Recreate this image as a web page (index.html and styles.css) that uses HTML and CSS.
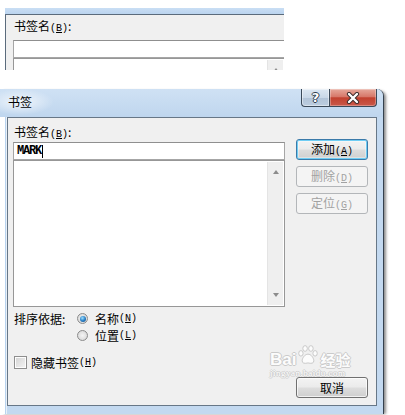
FILE: index.html
```html
<!DOCTYPE html>
<html lang="zh-CN">
<head>
<meta charset="utf-8">
<title>书签</title>
<link rel="stylesheet" href="styles.css">
</head>
<body>
<div class="snip">
  <div class="snip-bar"></div>
  <div class="snip-panel">
    <div class="label">书签名<span class="key">(<u>B</u>)</span>:</div>
    <div class="field"></div>
    <div class="list"><div class="scroll"><span class="arr up"></span></div></div>
  </div>
</div>

<div class="dialog">
  <div class="titlebar">
    <div class="title">书签</div>
    <div class="caption-btns">
      <div class="cb help">?</div>
      <div class="cb close">
        <svg width="14" height="12" viewBox="0 0 14 12">
          <path d="M3 2 L11 10 M11 2 L3 10" stroke="#3a2a2a" stroke-width="4.2" stroke-linecap="round" fill="none"/>
          <path d="M3 2 L11 10 M11 2 L3 10" stroke="#ffffff" stroke-width="2.4" stroke-linecap="round" fill="none"/>
        </svg>
      </div>
    </div>
  </div>
  <div class="body">
    <div class="panel">
      <div class="left">
        <div class="label">书签名<span class="key">(<u>B</u>)</span>:</div>
        <div class="field"><span class="mark">MARK</span><span class="caret"></span></div>
        <div class="list"><div class="scroll"><span class="arr up"></span><span class="arr down"></span></div></div>
        <div class="sort">
          <div class="sort-label">排序依据:</div>
          <div class="opts">
            <div class="opt"><span class="radio on"></span>名称<span class="key">(<u>N</u>)</span></div>
            <div class="opt"><span class="radio"></span>位置<span class="key">(<u>L</u>)</span></div>
          </div>
        </div>
        <div class="check-row"><span class="check"></span>隐藏书签<span class="key">(<u>H</u>)</span></div>
      </div>
      <div class="right">
        <button class="btn default">添加<span class="key">(<u>A</u>)</span></button>
        <button class="btn" disabled>删除<span class="key">(<u>D</u>)</span></button>
        <button class="btn" disabled>定位<span class="key">(<u>G</u>)</span></button>
        <button class="btn cancel">取消</button>
      </div>
    </div>
  </div>
  <div class="watermark">
    <div class="wm-row">
      <span class="wm-text">Bai</span>
      <svg class="paw" width="22" height="20" viewBox="0 0 26 24">
        <ellipse cx="4.5" cy="10" rx="2.6" ry="3.3" fill="#fff" stroke="#b8b8b8"/>
        <ellipse cx="9.5" cy="4.2" rx="2.7" ry="3.4" fill="#fff" stroke="#b8b8b8"/>
        <ellipse cx="16.5" cy="4.2" rx="2.7" ry="3.4" fill="#fff" stroke="#b8b8b8"/>
        <ellipse cx="21.5" cy="10" rx="2.6" ry="3.3" fill="#fff" stroke="#b8b8b8"/>
        <path d="M13 11 C9 11 6 16 6 19 C6 22 9 22.5 13 21.5 C17 22.5 20 22 20 19 C20 16 17 11 13 11 Z" fill="#fff" stroke="#b8b8b8"/>
      </svg>
      <span class="wm-text wm-cn">经验</span>
    </div>
    <div class="wm-url">jingyan.baidu.com</div>
  </div>
</div>
</body>
</html>
```
FILE: styles.css
```css
* { box-sizing: border-box; }
html, body { margin: 0; padding: 0; background: #fff; }
body {
  width: 405px;
  height: 415px;
  overflow: hidden;
  font-family: "Noto Sans CJK SC", "Noto Sans", sans-serif;
  font-size: 12px;
  color: #000;
}
.key { font-family: "Liberation Mono", monospace; font-size: 10px; }
.key u { text-underline-offset: 1px; }

/* ---------- top snippet ---------- */
.snip {
  margin: 8px 0 0 5px;
  width: 279px;
  height: 62px;
  overflow: hidden;
  display: flex;
  flex-direction: column;
}
.snip-bar { flex: none; height: 6px; background: linear-gradient(#c9def4, #bbd4ef); }
.snip-panel {
  flex: 1;
  background: #f0f0f0;
  border-top: 1px solid #5b6b7c;
  border-left: 1px solid #5b6b7c;
  padding: 3px 0 0 7px;
  width: 300px;
}
.snip-panel .label { line-height: 15px; margin-bottom: 4px; }

/* ---------- shared controls ---------- */
.label { line-height: 15px; padding-left: 1px; }
.field {
  width: 272px;
  height: 18px;
  background: #fff;
  border: 1px solid #a6a6a6;
  border-top-color: #8f8f8f;
  display: flex;
  align-items: center;
  padding-left: 3px;
}
.mark {
  font-family: "Liberation Mono", monospace;
  font-weight: bold;
  font-size: 12px;
  letter-spacing: -1.2px;
  line-height: 12px;
}
.caret { width: 1px; height: 13px; background: #000; margin-left: 1px; }
.list {
  width: 272px;
  height: 147px;
  background: #fff;
  border: 1px solid #979797;
  display: flex;
  justify-content: flex-end;
  padding: 1px;
}
.scroll {
  width: 16px;
  background: #efefef;
  border-left: 1px solid #e4e4e4;
  display: flex;
  flex-direction: column;
  justify-content: space-between;
  align-items: center;
  padding: 8px 0 8px;
}
.arr { width: 0; height: 0; border-left: 3.5px solid transparent; border-right: 3.5px solid transparent; }
.arr.up { border-bottom: 4px solid #8c8c8c; }
.arr.down { border-top: 4px solid #8c8c8c; }

/* ---------- dialog ---------- */
.dialog {
  position: relative;
  margin-top: 19px;
  width: 384px;
  height: 325px;
  border-right: 1px solid #34414e;
  border-top-right-radius: 7px;
  background: #c3d9f0;
  box-shadow: 3px 1px 3px -1px rgba(0,0,0,0.45);
}
.titlebar {
  height: 28px;
  display: flex;
  justify-content: space-between;
  align-items: flex-start;
  padding: 0 6px 0 8px;
  border-top-right-radius: 7px;
  background:
    radial-gradient(ellipse 34px 13px at 20px 13px, rgba(255,255,255,0.75), rgba(255,255,255,0) 100%),
    linear-gradient(#cfe1f4, #bfd6ee);
}
.title { padding-top: 6px; line-height: 14px; }
.caption-btns { display: flex; }
.cb {
  height: 18px;
  border: 1px solid #3b4a5a;
  border-top: none;
  display: flex;
  align-items: center;
  justify-content: center;
}
.help {
  width: 28px;
  border-right: none;
  border-bottom-left-radius: 4px;
  background: linear-gradient(#dce7f2 0%, #c9d8e8 50%, #b2c4d8 52%, #bccde0 100%);
  font-family: "DejaVu Sans", sans-serif;
  font-weight: bold;
  font-size: 13px;
  color: #fff;
  text-shadow: 1px 0 0 #2d3c4c, -1px 0 0 #2d3c4c, 0 1px 0 #2d3c4c, 0 -1px 0 #2d3c4c;
  box-shadow: inset 0 0 0 1px rgba(255,255,255,0.45);
}
.close {
  width: 48px;
  border-bottom-right-radius: 4px;
  background: linear-gradient(#e6a89b 0%, #d7786a 45%, #c2412f 52%, #c9584a 100%);
  box-shadow: inset 0 0 0 1px rgba(255,255,255,0.3);
}

.body {
  height: 297px;
  background: linear-gradient(to right, #ffffff 0 5px, #b9d3ee 5px 6px, #e8f0f8 6px 7px, rgba(0,0,0,0) 7px);
}
.panel {
  margin-left: 7px;
  width: 370px;
  height: 289px;
  background: #f0f0f0;
  border: 1px solid #677787;
  display: flex;
}
.left { width: 272px; margin-left: 5px; padding-top: 6px; }
.sort { display: flex; margin-top: 3px; padding-left: 1px; }
.sort-label { width: 63px; line-height: 17px; }
.opts { display: flex; flex-direction: column; }
.opt { display: flex; align-items: center; height: 17px; }
.radio {
  width: 11px;
  height: 11px;
  border-radius: 50%;
  border: 1px solid #8b8b8b;
  background: radial-gradient(circle at 50% 50%, #f4f4f4 0%, #e2e2e2 55%, #cfcfcf 100%);
  margin-right: 7px;
  display: flex;
  align-items: center;
  justify-content: center;
}
.radio.on::after {
  content: "";
  width: 6px;
  height: 6px;
  border-radius: 50%;
  background: radial-gradient(circle at 40% 35%, #9fe0ff 0%, #2b82c8 50%, #0e4680 100%);
}
.check-row { display: flex; align-items: center; height: 16px; margin-top: 10px; padding-left: 1px; }
.check {
  width: 13px;
  height: 13px;
  border: 1px solid #8e8e8e;
  background: linear-gradient(135deg, #d2d2d2, #f6f6f6);
  box-shadow: inset 0 0 0 1px #fdfdfd;
  margin-right: 4px;
}

.right {
  width: 72px;
  margin-left: 11px;
  padding-top: 21px;
  display: flex;
  flex-direction: column;
  gap: 6px;
}
.btn {
  width: 72px;
  height: 21px;
  padding: 0;
  border: 1px solid #707070;
  border-radius: 3px;
  background: linear-gradient(#f3f3f3 0%, #ebebeb 48%, #dddddd 52%, #cfcfcf 100%);
  box-shadow: inset 0 0 0 1px rgba(255,255,255,0.7);
  font-family: "Noto Sans CJK SC", "Noto Sans", sans-serif;
  font-size: 12px;
  line-height: 17px;
  color: #000;
}
.btn.default {
  border-color: #3b7aa9;
  box-shadow: inset 0 0 0 1px #6fcdf4, inset 0 0 0 2px rgba(255,255,255,0.35);
}
.btn:disabled {
  border-color: #b3b6b9;
  background: #f4f4f4;
  box-shadow: none;
  color: #a2a2a2;
}
.btn.cancel { margin-top: auto; margin-bottom: 7px; }

/* ---------- watermark overlay ---------- */
.watermark {
  position: absolute;
  left: 270px;
  top: 258px;
  pointer-events: none;
  opacity: 0.85;
}
.wm-row { display: flex; align-items: flex-end; height: 21px; }
.wm-text {
  font-family: "Liberation Sans", sans-serif;
  font-weight: bold;
  font-size: 17px;
  line-height: 17px;
  color: #ffffff;
  text-shadow: 1px 0 0 #c4c4c4, -1px 0 0 #c4c4c4, 0 1px 0 #c4c4c4, 0 -1px 0 #c4c4c4;
}
.wm-cn { font-family: "Noto Sans CJK SC", sans-serif; font-size: 15px; margin-left: 1px; }
.paw { margin: 0 0 3px 1px; }
.wm-url {
  font-family: "Liberation Serif", serif;
  font-size: 9px;
  line-height: 10px;
  letter-spacing: 0.5px;
  color: #ffffff;
  text-shadow: 1px 0 0 #c8c8c8, -1px 0 0 #c8c8c8, 0 1px 0 #c8c8c8, 0 -1px 0 #c8c8c8;
}
```
